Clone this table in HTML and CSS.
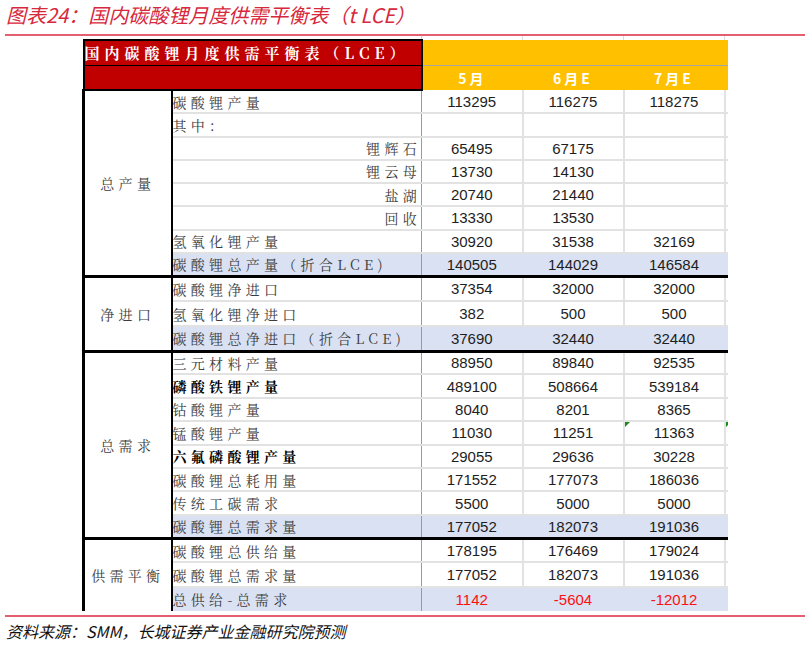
FILE: index.html
```html
<!DOCTYPE html>
<html lang="zh">
<head>
<meta charset="utf-8">
<title>国内碳酸锂月度供需平衡表</title>
<link rel="stylesheet" href="styles.css">
</head>
<body>
<div class="page">
  <div class="title">图表24：国内碳酸锂月度供需平衡表（t LCE）</div>
  <table class="sheet">
    <colgroup>
      <col class="c-cat"><col class="c-label"><col class="c-num"><col class="c-num"><col class="c-num"><col class="c-tail">
    </colgroup>
    <thead>
      <tr class="gap"><td colspan="2" class="gap-l"></td><td class="gap-d"></td><td class="gap-d"></td><td class="gap-d"></td><td></td></tr>
      <tr class="h1"><th colspan="2" class="red red-top">国内碳酸锂月度供需平衡表（LCE）</th><th colspan="4" class="yel yel-top"></th></tr>
      <tr class="h2"><th colspan="2" class="red red-bot"></th><th class="yel mon">5月</th><th class="yel mon">6月E</th><th class="yel mon">7月E</th><th class="yel"></th></tr>
    </thead>
    <tbody class="s1">
      <tr><td rowspan="8" class="cat">总产量</td><td class="lab">碳酸锂产量</td><td class="num">113295</td><td class="num">116275</td><td class="num">118275</td><td class="tail"></td></tr>
      <tr><td class="lab">其中：</td><td class="num"></td><td class="num"></td><td class="num"></td><td class="tail"></td></tr>
      <tr><td class="lab r">锂辉石</td><td class="num">65495</td><td class="num">67175</td><td class="num"></td><td class="tail"></td></tr>
      <tr><td class="lab r">锂云母</td><td class="num">13730</td><td class="num">14130</td><td class="num"></td><td class="tail"></td></tr>
      <tr><td class="lab r">盐湖</td><td class="num">20740</td><td class="num">21440</td><td class="num"></td><td class="tail"></td></tr>
      <tr><td class="lab r">回收</td><td class="num">13330</td><td class="num">13530</td><td class="num"></td><td class="tail"></td></tr>
      <tr><td class="lab">氢氧化锂产量</td><td class="num">30920</td><td class="num">31538</td><td class="num">32169</td><td class="tail"></td></tr>
      <tr class="blue"><td class="lab">碳酸锂总产量（折合LCE)</td><td class="num">140505</td><td class="num">144029</td><td class="num">146584</td><td class="tail"></td></tr>
    </tbody>
    <tbody class="s2">
      <tr class="sep"><td rowspan="3" class="cat">净进口</td><td class="lab">碳酸锂净进口</td><td class="num">37354</td><td class="num">32000</td><td class="num">32000</td><td class="tail"></td></tr>
      <tr><td class="lab">氢氧化锂净进口</td><td class="num">382</td><td class="num">500</td><td class="num">500</td><td class="tail"></td></tr>
      <tr class="blue"><td class="lab">碳酸锂总净进口（折合LCE)</td><td class="num">37690</td><td class="num">32440</td><td class="num">32440</td><td class="tail"></td></tr>
    </tbody>
    <tbody class="s3">
      <tr class="sep"><td rowspan="8" class="cat">总需求</td><td class="lab">三元材料产量</td><td class="num">88950</td><td class="num">89840</td><td class="num">92535</td><td class="tail"></td></tr>
      <tr><td class="lab bold">磷酸铁锂产量</td><td class="num">489100</td><td class="num">508664</td><td class="num">539184</td><td class="tail"></td></tr>
      <tr><td class="lab">钴酸锂产量</td><td class="num">8040</td><td class="num">8201</td><td class="num">8365</td><td class="tail"></td></tr>
      <tr><td class="lab">锰酸锂产量</td><td class="num">11030</td><td class="num">11251</td><td class="num flag">11363</td><td class="tail flag"></td></tr>
      <tr><td class="lab bold">六氟磷酸锂产量</td><td class="num">29055</td><td class="num">29636</td><td class="num">30228</td><td class="tail"></td></tr>
      <tr><td class="lab">碳酸锂总耗用量</td><td class="num">171552</td><td class="num">177073</td><td class="num">186036</td><td class="tail"></td></tr>
      <tr><td class="lab">传统工碳需求</td><td class="num">5500</td><td class="num">5000</td><td class="num">5000</td><td class="tail"></td></tr>
      <tr class="blue"><td class="lab">碳酸锂总需求量</td><td class="num">177052</td><td class="num">182073</td><td class="num">191036</td><td class="tail"></td></tr>
    </tbody>
    <tbody class="s4">
      <tr class="sep"><td rowspan="3" class="cat">供需平衡</td><td class="lab">碳酸锂总供给量</td><td class="num">178195</td><td class="num">176469</td><td class="num">179024</td><td class="tail"></td></tr>
      <tr><td class="lab">碳酸锂总需求量</td><td class="num">177052</td><td class="num">182073</td><td class="num">191036</td><td class="tail"></td></tr>
      <tr class="blue last"><td class="lab">总供给-总需求</td><td class="num neg">1142</td><td class="num neg">-5604</td><td class="num neg">-12012</td><td class="tail"></td></tr>
    </tbody>
  </table>
  <div class="source">资料来源：SMM，长城证券产业金融研究院预测</div>
</div>
</body>
</html>
```

FILE: styles.css
```css
* { box-sizing: border-box; }

body {
  margin: 0;
  background: #ffffff;
  font-family: "Liberation Sans", Arial, sans-serif;
}

.page {
  width: 810px;
  height: 646px;
  overflow: hidden;
}

.title {
  margin: 0 5px;
  height: 36px;
  padding: 0 0 0 1px;
  border-bottom: 2px solid #e4606f;
  font-family: "Noto Sans CJK SC", sans-serif;
  font-style: italic;
  font-size: 20px;
  line-height: 30px;
  color: #d7283c;
  white-space: nowrap;
}

.sheet {
  margin-left: 82px;
  width: 644px;
  border-collapse: collapse;
  table-layout: fixed;
}

.c-cat { width: 88px; }
.c-label { width: 250px; }
.c-num { width: 101px; }
.c-tail { width: 3px; }

.sheet td, .sheet th {
  padding: 0;
  white-space: nowrap;
  overflow: hidden;
}

.gap td { height: 4px; }
.gap-l { border-right: 1px solid #cfcfcf; }
.gap-d { border-right: 1px solid #dcdcdc; }

.h1 th, .h2 th { height: 25px; }

.red {
  background: #c00000;
  border: 2px solid #000000;
  color: #ffffff;
  text-align: left;
  padding-left: 6px;
  font-family: "Noto Serif CJK SC", "Noto Sans CJK SC", serif;
  font-weight: bold;
  font-size: 15px;
  letter-spacing: 5px;
}
.red-top { border-bottom: 1px solid #000000; }
.red-bot { border-top: 1px solid #000000; }

.yel {
  background: #ffc000;
  border: none;
}
.yel-top { border-bottom: 1px solid #a6a6a6; }

.mon {
  color: #ffffff;
  text-align: center;
  padding-left: 3px;
  font-family: "Noto Sans CJK SC", sans-serif;
  font-weight: bold;
  font-size: 14px;
  letter-spacing: 3px;
}

.s1 td { height: 23.25px; }
.s2 td { height: 25px; }
.s3 td { height: 23.4px; }
.s4 td { height: 24.3px; }

.cat {
  border-left: 3px solid #000000;
  border-right: 2px solid #000000;
  text-align: center;
  padding-left: 4px;
  font-family: "Noto Serif CJK SC", "Noto Sans CJK SC", serif;
  font-size: 14px;
  letter-spacing: 4.3px;
  color: #3c3c3c;
}

.lab {
  border-bottom: 2px solid #e2e2e2;
  border-right: 1px solid #9a9a9a;
  padding-left: 6px;
  text-align: left;
  font-family: "Noto Serif CJK SC", "Noto Sans CJK SC", serif;
  font-size: 14px;
  letter-spacing: 4.3px;
  color: #3c3c3c;
}
.lab.r { text-align: right; padding-right: 0; }
.lab.bold { font-weight: bold; color: #000000; }

.num {
  border-bottom: 2px solid #e2e2e2;
  border-right: 2px solid #e2e2e2;
  text-align: center;
  font-size: 15px;
  color: #1e1e1e;
  padding-top: 1px;
}
.tail { border-bottom: 2px solid #e2e2e2; }

.blue .lab, .blue .num, .blue .tail {
  background: #d9e1f2;
  border-bottom-color: #d9e1f2;
}
.blue .num { border-right-color: #d9e1f2; }
.last .cat, .last .lab, .last .num, .last .tail { border-bottom: none; }

.sep td { border-top: 3px solid #000000; }

.neg { color: #ff1010; }

.flag { position: relative; }
.flag::before {
  content: "";
  position: absolute;
  left: 0;
  top: 0;
  border-top: 5px solid #1a8a1a;
  border-right: 5px solid transparent;
}

.source {
  margin: 4px 5px 0;
  border-top: 2px solid #e4606f;
  padding: 3px 0 0 1px;
  font-family: "Noto Sans CJK SC", sans-serif;
  font-style: italic;
  font-size: 16px;
  line-height: 22px;
  color: #111111;
  white-space: nowrap;
}
```
